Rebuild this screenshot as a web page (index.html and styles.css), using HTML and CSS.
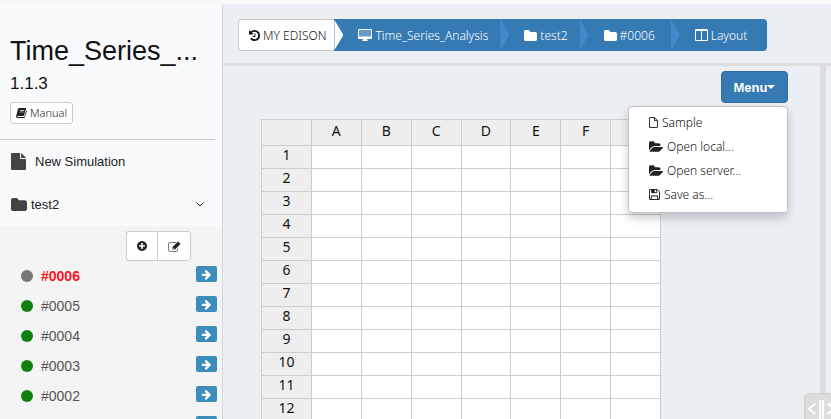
FILE: index.html
```html
<!DOCTYPE html>
<html lang="en">
<head>
<meta charset="utf-8">
<title>Time_Series_Analysis</title>
<link rel="stylesheet" href="styles.css">
</head>
<body>
<svg class="defs" aria-hidden="true">
  <symbol id="arrow" viewBox="0 0 1792 1792"><path d="M1600 960q0 54-37 91l-651 651q-39 37-91 37-51 0-90-37l-75-75q-38-38-38-91t38-91l293-293h-704q-52 0-84.500-37.500t-32.500-90.500v-128q0-53 32.500-90.500t84.500-37.500h704l-293-294q-38-36-38-90t38-90l75-75q38-38 90-38 53 0 91 38l651 651q37 35 37 90z"/></symbol>
  <symbol id="folder" viewBox="64 128 1664 1408" preserveAspectRatio="none"><path d="M1728 608v704q0 92-66 158t-158 66h-1216q-92 0-158-66t-66-158v-960q0-92 66-158t158-66h320q92 0 158 66t66 158v32h672q92 0 158 66t66 158z"/></symbol>
  <symbol id="folder-open" viewBox="0 128 1879 1408"><path d="M1879 952q0 31-31 66l-336 396q-43 51-120.500 86.500t-143.500 35.500h-1088q-34 0-60.500-13t-26.500-43q0-31 31-66l336-396q43-51 120.500-86.500t143.500-35.500h1088q34 0 60.500 13t26.500 43zm-343-344v160h-832q-94 0-197 47.500t-164 119.500l-337 396-5 6q0-4-.5-12.500t-.5-12.500v-960q0-92 66-158t158-66h320q92 0 158 66t66 158v32h544q92 0 158 66t66 158z"/></symbol>
  <symbol id="plus" viewBox="128 128 1536 1536"><path d="M1344 960v-128q0-26-19-45t-45-19h-256v-256q0-26-19-45t-45-19h-128q-26 0-45 19t-19 45v256h-256q-26 0-45 19t-19 45v128q0 26 19 45t45 19h256v256q0 26 19 45t45 19h128q26 0 45-19t19-45v-256h256q26 0 45-19t19-45zm320-64q0 209-103 385.500t-279.500 279.500-385.500 103-385.500-103-279.500-279.500-103-385.500 103-385.500 279.500-279.500 385.500-103 385.500 103 279.500 279.500 103 385.500z"/></symbol>
  <symbol id="history" viewBox="128 128 1536 1536"><path d="M1664 896q0 156-61 298t-164 245-245 164-298 61q-172 0-327-72.500t-264-204.500q-7-10-6.500-22.500t8.500-20.500l137-138q10-9 25-9 16 2 23 12 73 95 179 147t225 52q104 0 198.500-40.500t163.500-109.500 109.500-163.500 40.500-198.500-40.500-198.500-109.500-163.500-163.500-109.500-198.500-40.500q-98 0-188 35.500t-160 101.500l137 138q31 30 14 69-17 40-59 40h-448q-26 0-45-19t-19-45v-448q0-42 40-59 39-17 69 14l130 129q107-101 244.500-156.500t284.500-55.500q156 0 298 61t245 164 164 245 61 298zm-640-288v448q0 14-9 23t-23 9h-320q-14 0-23-9t-9-23v-64q0-14 9-23t23-9h224v-352q0-14 9-23t23-9h64q14 0 23 9t9 23z"/></symbol>
  <symbol id="desktop" viewBox="0 0 14 12"><path class="glass" d="M1 1h12v7H1z"/><path fill-rule="evenodd" d="M1 0h12q1 0 1 1v8q0 1-1 1H9q0 1 .6 1.300V12H4.400v-.7Q5 11 5 10H1q-1 0-1-1V1q0-1 1-1zm0 1v6.500h12V1z"/></symbol>
  <symbol id="columns" viewBox="0 0 13 12"><path fill-rule="evenodd" d="M1 0h11q1 0 1 1v10q0 1-1 1H1q-1 0-1-1V1q0-1 1-1zm0 2V11h5V2zm6 0V11h5V2z"/></symbol>
  <symbol id="file" viewBox="0 0 15 17"><path d="M1 0h8v5q0 1 1 1h5v10q0 1-1 1H1q-1 0-1-1V1q0-1 1-1zm9 .2q.5.1.9.500l3.400 3.300q.400.400.5 1H10z"/></symbol>
  <symbol id="file-o" viewBox="0 0 10 12"><path class="line" d="M1 .5h5L9.500 4v7q0 .5-.5.5H1q-.5 0-.5-.5V1q0-.5.5-.5zM6 .5V4h3.500"/></symbol>
  <symbol id="save" viewBox="0 0 12 12"><path class="line" d="M1 .5h8L11.500 3v8q0 .5-.5.5H1q-.5 0-.5-.5V1q0-.5.5-.5zM2.500 11.500v-4h7v4M3 .5v3.500h5.500V.5"/><path d="M3 .5h3v3.500H3z"/></symbol>
  <symbol id="book" viewBox="0 0 12 11"><path fill-rule="evenodd" d="M3.500 0h6.800q1 0 .7 1L8.800 8q-.3.900-1.200.900H1.700q-.5 0-.5.5t.6.500h6.500q.700 0 .9-.6L11.400 2.500q.7.300.5 1L9.800 10q-.3 1-1.400 1H1.500Q-.2 10.900.1 9L2 1.500Q2.400 0 3.500 0zm1 2.200-.2.800h4.600l.2-.8zM3.900 4l-.2.800h4.600l.2-.8z"/></symbol>
  <symbol id="edit" viewBox="0 0 13 11"><path class="line thin" d="M8 1.500H2Q.5 1.500.5 3v6q0 1.500 1.500 1.500h6Q9.500 10.500 9.500 9V7.500"/><path d="M4.500 8.500V6L10 .5 12.500 3 7 8.500zM5.300 6.500v1.200h1.200z" fill-rule="evenodd"/></symbol>
  <symbol id="chevron" viewBox="0 0 8 5"><path class="line" d="M.5.5 4 4 7.500.5"/></symbol>
</svg>
<div class="app">
  <aside class="sidebar">
    <header class="intro">
      <h1>Time_Series_...</h1>
      <p class="version">1.1.3</p>
      <button class="manual"><svg class="i-book"><use href="#book"/></svg>Manual</button>
    </header>
    <nav class="links">
      <a href="#new"><svg class="i-file"><use href="#file"/></svg>New Simulation</a>
      <a href="#test2" class="project"><svg class="i-folder"><use href="#folder"/></svg>test2<svg class="i-chevron"><use href="#chevron"/></svg></a>
    </nav>
    <section class="jobs">
      <div class="tools">
        <button aria-label="Add"><svg class="i-plus"><use href="#plus"/></svg></button>
        <button aria-label="Edit"><svg class="i-edit"><use href="#edit"/></svg></button>
      </div>
      <ul>
        <li class="current"><span class="dot"></span><a href="#6">#0006</a><button class="go" aria-label="Open #0006"><svg><use href="#arrow"/></svg></button></li>
        <li><span class="dot"></span><a href="#5">#0005</a><button class="go" aria-label="Open #0005"><svg><use href="#arrow"/></svg></button></li>
        <li><span class="dot"></span><a href="#4">#0004</a><button class="go" aria-label="Open #0004"><svg><use href="#arrow"/></svg></button></li>
        <li><span class="dot"></span><a href="#3">#0003</a><button class="go" aria-label="Open #0003"><svg><use href="#arrow"/></svg></button></li>
        <li><span class="dot"></span><a href="#2">#0002</a><button class="go" aria-label="Open #0002"><svg><use href="#arrow"/></svg></button></li>
        <li><span class="dot"></span><button class="go" aria-label="Open next job"><svg><use href="#arrow"/></svg></button></li>
      </ul>
    </section>
  </aside>
  <main class="main">
    <nav class="topbar" aria-label="Breadcrumb">
      <ol class="crumbs">
        <li class="home"><a href="#home"><svg class="i-history"><use href="#history"/></svg>MY EDISON</a></li>
        <li><a href="#app"><svg class="i-desktop"><use href="#desktop"/></svg>Time_Series_Analysis</a></li>
        <li><a href="#project"><svg class="i-crumb"><use href="#folder"/></svg>test2</a></li>
        <li class="job"><a href="#job"><svg class="i-crumb"><use href="#folder"/></svg>#0006</a></li>
        <li class="last"><a href="#layout"><svg class="i-columns"><use href="#columns"/></svg>Layout</a></li>
      </ol>
    </nav>
    <div class="workspace">
      <section class="panel">
        <div class="menu">
          <button class="menu-button" aria-expanded="true">Menu<span class="caret"></span></button>
          <ul class="dropdown">
            <li><a href="#sample"><svg class="i-fileo"><use href="#file-o"/></svg>Sample</a></li>
            <li><a href="#local"><svg class="i-open"><use href="#folder-open"/></svg>Open local...</a></li>
            <li><a href="#server"><svg class="i-open"><use href="#folder-open"/></svg>Open server...</a></li>
            <li><a href="#save"><svg class="i-save"><use href="#save"/></svg>Save as...</a></li>
          </ul>
        </div>
        <table class="sheet">
          <thead><tr><th></th><th>A</th><th>B</th><th>C</th><th>D</th><th>E</th><th>F</th><th></th></tr></thead>
          <tbody>
            <tr><th>1</th><td></td><td></td><td></td><td></td><td></td><td></td><td></td></tr>
            <tr><th>2</th><td></td><td></td><td></td><td></td><td></td><td></td><td></td></tr>
            <tr><th>3</th><td></td><td></td><td></td><td></td><td></td><td></td><td></td></tr>
            <tr><th>4</th><td></td><td></td><td></td><td></td><td></td><td></td><td></td></tr>
            <tr><th>5</th><td></td><td></td><td></td><td></td><td></td><td></td><td></td></tr>
            <tr><th>6</th><td></td><td></td><td></td><td></td><td></td><td></td><td></td></tr>
            <tr><th>7</th><td></td><td></td><td></td><td></td><td></td><td></td><td></td></tr>
            <tr><th>8</th><td></td><td></td><td></td><td></td><td></td><td></td><td></td></tr>
            <tr><th>9</th><td></td><td></td><td></td><td></td><td></td><td></td><td></td></tr>
            <tr><th>10</th><td></td><td></td><td></td><td></td><td></td><td></td><td></td></tr>
            <tr><th>11</th><td></td><td></td><td></td><td></td><td></td><td></td><td></td></tr>
            <tr><th>12</th><td></td><td></td><td></td><td></td><td></td><td></td><td></td></tr>
          </tbody>
        </table>
      </section>
      <div class="divider"></div>
      <div class="next"></div>
      <button class="handle" aria-label="Resize panels"><svg viewBox="0 0 36 26"><path d="M11 10 4 15.500 11 21M24 10l7 5.500-7 5.500"/><path d="M16 6v20M19 6v20"/></svg></button>
    </div>
  </main>
</div>
</body>
</html>
```
FILE: styles.css
```css
* { box-sizing: border-box; }
body { margin: 0; font-family: "Liberation Sans", sans-serif; color: #111; overflow: hidden; }
a { color: inherit; text-decoration: none; }
button { font: inherit; margin: 0; padding: 0; }
ul, ol { list-style: none; margin: 0; padding: 0; }
svg { fill: currentColor; flex: none; display: block; }
.line { fill: none; stroke: currentColor; }
.thin { opacity: .6; }
.glass { opacity: .25; }
.defs { position: absolute; width: 0; height: 0; }

.app { display: flex; height: 100vh; border-top: 4px solid #f8f8f8; overflow: hidden; }

.sidebar { flex: 0 0 223px; background: #f9fafc; border-right: 1px solid #d2d6de; display: flex; flex-direction: column; }
.intro { margin-right: 7px; padding: 29px 0 15px 10px; border-bottom: 1px solid #c8c8c8; }
h1 { margin: 0; font-size: 27px; line-height: 36px; font-weight: 400; }
.version { margin: 0; padding: 2px 0 6px; font-size: 17px; line-height: 25px; }
.manual { display: flex; align-items: center; gap: 3px; height: 22px; padding: 0 5px; border: 1px solid #ccc; border-radius: 3px; background: #fff; color: #222; font-family: "Noto Sans", sans-serif; font-size: 11px; font-weight: 300; line-height: 14px; }
.i-book { width: 11px; height: 10px; color: #222; }
.links a { display: flex; align-items: center; height: 43px; padding: 0 18px 0 11px; font-size: 13px; }
.links { color: #222; }
.i-file { width: 15px; height: 17px; margin-right: 9px; color: #444; }
.i-folder { width: 16px; height: 13px; margin-right: 4px; color: #444; }
.i-chevron { width: 8px; height: 5px; margin-left: auto; }
.jobs { flex: 1; background: #f4f4f4; }
.tools { display: flex; justify-content: flex-end; padding: 5px 31px 0 0; }
.tools button { display: grid; place-items: center; width: 34px; height: 30px; border: 1px solid #ccc; background: #fff; color: #222; }
.tools button:first-child { border-radius: 3px 0 0 3px; border-right: 0; width: 31px; }
.tools button:last-child { border-radius: 0 3px 3px 0; }
.i-plus { width: 10px; height: 10px; }
.i-edit { width: 13px; height: 11px; }
.jobs li { display: flex; align-items: center; height: 30px; padding: 0 5px 0 21px; font-size: 14px; color: #555; }
.dot { width: 12px; height: 12px; margin-right: 8px; border-radius: 50%; background: #118011; }
.current .dot { background: #777; }
.current a { color: #fb1220; font-weight: 700; }
.go { display: grid; place-items: center; width: 21px; height: 16px; margin: 0 0 4px auto; border: 0; border-radius: 2px; background: #3c8dbc; color: #fff; }
.go svg { width: 11px; height: 11px; }

.main { flex: 1; min-width: 0; display: flex; flex-direction: column; background: #ebeff4; }
.topbar { padding: 15px 15px 12px; border-bottom: 3px solid #ddd; }
.crumbs { display: flex; width: max-content; font-family: "Noto Sans", sans-serif; font-size: 12px; font-weight: 300; color: #fff; }
.crumbs li { position: relative; height: 32px; background: #367ab4; }
.crumbs a { display: flex; align-items: center; gap: 3px; height: 100%; padding: 0 12px 0 24px; }
.crumbs li:not(.last)::after { content: ""; position: absolute; z-index: 1; left: 100%; top: 0; width: 9px; height: 100%; background: #428bca; clip-path: polygon(0 0, 100% 50%, 0 100%); }
.crumbs .home { background: #fff; color: #111; border: 1px solid #ccc; border-right: 0; border-radius: 4px 0 0 4px; }
.crumbs .home:not(.last)::after { background: #fff; }
.crumbs .home a { padding: 0 8px 0 10px; }
.crumbs .job a { padding-right: 16px; }
.crumbs .last { border-radius: 0 4px 4px 0; }
.crumbs .last a { padding-right: 20px; }
.i-history { width: 11px; height: 11px; }
.i-desktop { width: 14px; height: 12px; }
.i-crumb { width: 13px; height: 11px; }
.i-columns { width: 13px; height: 12px; }

.workspace { position: relative; flex: 1; min-height: 0; display: flex; }
.panel { flex: 1; min-width: 0; padding: 5px 32px 0 38px; overflow: hidden; }
.divider { flex: none; width: 6px; background: #ddd; }
.next { flex: none; width: 5px; }
.menu { position: relative; width: max-content; margin: 0 0 16px auto; }
.menu-button { display: flex; align-items: center; justify-content: center; width: 67px; height: 32px; border: 1px solid #2e6da4; border-radius: 4px; background: #367ab4; color: #fff; font-size: 13px; font-weight: 700; }
.caret { border: 4px solid transparent; border-top-color: #fff; border-bottom: 0; }
.dropdown { position: absolute; z-index: 2; right: 0; top: 35px; width: 160px; padding: 3px 0 6px; border: 1px solid #c4c6ca; border-radius: 4px; background: #fff; box-shadow: 0 5px 10px rgba(0, 0, 0, .2); font-family: "Noto Sans", sans-serif; font-size: 12px; font-weight: 300; color: #111; }
.dropdown a { display: flex; align-items: center; gap: 4px; height: 24px; padding: 0 20px; }
.i-fileo { width: 9px; height: 11px; }
.i-open { width: 14px; height: 11px; color: #222; }
.i-save { width: 11px; height: 11px; }
.sheet { border-collapse: collapse; table-layout: fixed; width: 400px; background: #fff; }
.sheet th, .sheet td { height: 23px; padding: 0; border: 1px solid #ccc; }
.sheet th { background: #eee; font: 400 14px/18px "Noto Sans", sans-serif; text-align: center; vertical-align: top; }
.sheet thead th { height: 26px; padding-top: 2px; }
.handle { position: absolute; right: -9px; bottom: 0; width: 36px; height: 26px; border: 1px solid #d0d0d0; border-bottom: 0; border-radius: 5px 5px 0 0; background: #ddd; }
.handle svg { width: 100%; height: 100%; }
.handle path { fill: none; stroke: #fff; stroke-width: 2px; }
```
